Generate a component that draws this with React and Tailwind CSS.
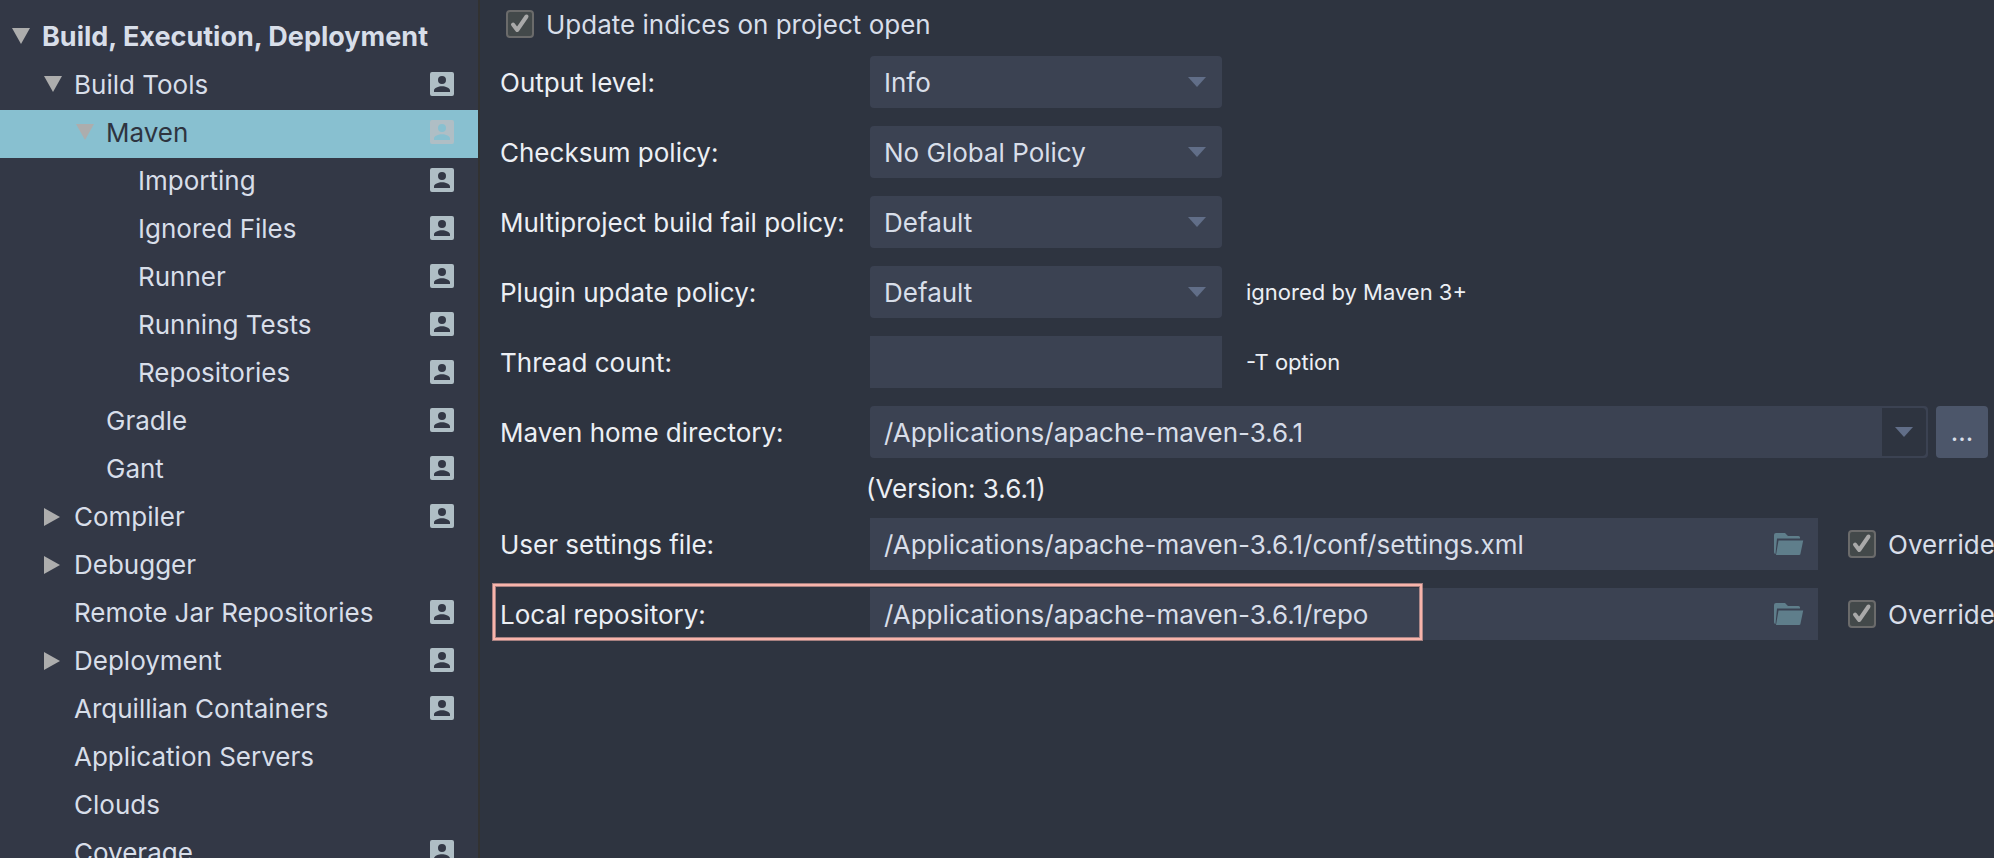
import { useState } from "react";

const tree = [
  { label: "Build, Execution, Deployment", level: 0, state: "open", bold: true },
  { label: "Build Tools", level: 1, state: "open", user: true },
  { label: "Maven", level: 2, state: "open", user: true },
  { label: "Importing", level: 3, user: true },
  { label: "Ignored Files", level: 3, user: true },
  { label: "Runner", level: 3, user: true },
  { label: "Running Tests", level: 3, user: true },
  { label: "Repositories", level: 3, user: true },
  { label: "Gradle", level: 2, user: true },
  { label: "Gant", level: 2, user: true },
  { label: "Compiler", level: 1, state: "closed", user: true },
  { label: "Debugger", level: 1, state: "closed" },
  { label: "Remote Jar Repositories", level: 1, user: true },
  { label: "Deployment", level: 1, state: "closed", user: true },
  { label: "Arquillian Containers", level: 1, user: true },
  { label: "Application Servers", level: 1 },
  { label: "Clouds", level: 1 },
  { label: "Coverage", level: 1, user: true },
];

const indents = ["pl-[12px]", "pl-[44px]", "pl-[76px]", "pl-[108px]"];

function UserIcon() {
  return (
    <svg viewBox="0 0 24 24" className="size-6 shrink-0 fill-[#afbec5]" aria-hidden="true">
      <path
        fillRule="evenodd"
        d="M2 0h20a2 2 0 0 1 2 2v20a2 2 0 0 1-2 2H2a2 2 0 0 1-2-2V2a2 2 0 0 1 2-2zM12 4a4 4 0 1 0 0 8a4 4 0 1 0 0-8zM4 20h16v-1.500c0-2.700-4.500-4.300-8-4.300s-8 1.600-8 4.300z"
      />
    </svg>
  );
}

function Disclosure({ state }) {
  return (
    <svg viewBox="0 0 18 18" className="mt-[2px] size-[18px] shrink-0 fill-[#adadad]" aria-hidden="true">
      {state === "open" && <path d="M0 0h18l-9 16z" />}
      {state === "closed" && <path d="M0 0l16 9l-16 9z" />}
    </svg>
  );
}

function TreeRow({ item, selected, onSelect }) {
  const tone = selected ? "bg-[#88c0d0] text-[#2e3440]" : "text-[#d8dee9]";
  return (
    <li>
      <button
        type="button"
        onClick={onSelect}
        aria-current={selected ? "page" : undefined}
        aria-expanded={item.state ? item.state === "open" : undefined}
        className={`flex h-12 w-full items-center gap-3 pr-6 pb-1 text-left ${indents[item.level]} ${tone}`}
      >
        <Disclosure state={item.state} />
        <span className={`flex-1 pt-[2px] whitespace-nowrap ${item.bold ? "text-[27px] font-bold" : ""}`}>
          {item.label}
        </span>
        {item.user && <UserIcon />}
      </button>
    </li>
  );
}

function DownArrow({ className }) {
  return (
    <svg viewBox="0 0 18 10" className={`h-[10px] w-[18px] fill-[#616e88] ${className}`} aria-hidden="true">
      <path d="M0 0h18l-9 10z" />
    </svg>
  );
}

function CheckBox({ label }) {
  return (
    <label className="flex items-center gap-3 whitespace-nowrap text-[#d8dee9]">
      <span className="grid size-7 shrink-0">
        <input
          type="checkbox"
          defaultChecked
          className="peer col-start-1 row-start-1 size-7 appearance-none rounded-[4px] border-2 border-[#6b6b6b] bg-[#43494a]"
        />
        <svg
          viewBox="0 0 28 28"
          className="pointer-events-none invisible col-start-1 row-start-1 size-7 fill-none stroke-[#a9a9a9] stroke-[4] peer-checked:visible"
          aria-hidden="true"
        >
          <path d="M7 14.500l4.200 5.500l9.300-13.500" strokeLinecap="round" strokeLinejoin="round" />
        </svg>
      </span>
      <span className="pt-[2px]">{label}</span>
    </label>
  );
}

function Row({ id, label, children }) {
  return (
    <div className="flex h-[52px] items-center">
      <label htmlFor={id} className="w-[370px] shrink-0 pt-[2px] whitespace-nowrap">
        {label}
      </label>
      {children}
    </div>
  );
}

function Select({ id, options }) {
  return (
    <span className="grid w-[352px] shrink-0 items-center">
      <select
        id={id}
        className="col-start-1 row-start-1 h-[52px] w-full appearance-none rounded-[4px] bg-[#3b4252] pt-[2px] pr-12 pl-[14px] text-[#d8dee9]"
      >
        {options.map((o) => (
          <option key={o}>{o}</option>
        ))}
      </select>
      <DownArrow className="pointer-events-none col-start-1 row-start-1 mr-4 justify-self-end" />
    </span>
  );
}

function FileField({ id, value }) {
  return (
    <>
      <span className="flex h-[52px] min-w-0 flex-1 items-center bg-[#3b4252] pr-[14px] pl-[14px]">
        <input
          id={id}
          defaultValue={value}
          className="min-w-0 flex-1 bg-transparent pt-[2px] text-[#d8dee9] outline-none"
        />
        <button type="button" aria-label="Browse">
          <svg viewBox="0 0 30 22" className="h-[22px] w-[30px] fill-[#5f7e8b]" aria-hidden="true">
            <path d="M0 2a2 2 0 0 1 2-2h9l3 3h10.500a1.500 1.500 0 0 1 1.500 1.500V5.500H3L1.500 21A2 2 0 0 1 0 19z" />
            <path d="M4.500 7.500H29.200l-2.700 13a1.500 1.500 0 0 1-1.500 1.500H2z" />
          </svg>
        </button>
      </span>
      <div className="w-[176px] shrink-0 pl-[30px]">
        <CheckBox label="Override" />
      </div>
    </>
  );
}

export default function App() {
  const [selected, setSelected] = useState("Maven");
  return (
    <div className="flex h-screen overflow-hidden bg-[#2e3440] font-['Inter',sans-serif] text-[26px] leading-8 text-[#eceff4]">
      <nav className="w-[480px] shrink-0 border-r-2 border-[#323232] bg-[#333846] pt-[14px]" aria-label="Settings">
        <ul>
          {tree.map((item) => (
            <TreeRow
              key={item.label}
              item={item}
              selected={item.label === selected}
              onSelect={() => setSelected(item.label)}
            />
          ))}
        </ul>
      </nav>

      <main className="min-w-0 flex-1 pt-[7px] pl-5">
        <div className="pl-[6px]">
          <CheckBox label="Update indices on project open" />
        </div>
        <form className="mt-[15px] flex flex-col gap-[18px]">
          <Row id="output" label="Output level:">
            <Select id="output" options={["Info", "Debug", "Warn", "Error", "Fatal"]} />
          </Row>
          <Row id="checksum" label="Checksum policy:">
            <Select id="checksum" options={["No Global Policy", "Fail", "Warn", "Ignore"]} />
          </Row>
          <Row id="fail" label="Multiproject build fail policy:">
            <Select id="fail" options={["Default", "Fail Fast", "Fail At End", "Never Fail"]} />
          </Row>
          <Row id="plugin" label="Plugin update policy:">
            <Select id="plugin" options={["Default", "Check For Updates", "Do Not Update"]} />
            <span className="pl-6 text-[22px]">ignored by Maven 3+</span>
          </Row>
          <Row id="threads" label="Thread count:">
            <input id="threads" className="h-[52px] w-[352px] bg-[#3b4252] px-[14px] text-[#d8dee9]" />
            <span className="pl-6 text-[22px]">-T option</span>
          </Row>
          <div>
            <Row id="home" label="Maven home directory:">
              <span className="flex h-[52px] min-w-0 flex-1 rounded-[4px] bg-[#3b4252] p-[2px]">
                <input
                  id="home"
                  defaultValue="/Applications/apache-maven-3.6.1"
                  className="min-w-0 flex-1 bg-transparent pt-[2px] pl-3 text-[#d8dee9] outline-none"
                />
                <button
                  type="button"
                  aria-label="Recent directories"
                  className="flex w-11 items-center justify-center rounded-r-[4px] bg-[#2e3440]"
                >
                  <DownArrow className="" />
                </button>
              </span>
              <button
                type="button"
                className="mr-[6px] ml-2 size-[52px] shrink-0 rounded-[4px] bg-[#4c566a] text-[#d8dee9]"
              >
                ...
              </button>
            </Row>
            <p className="mt-[15px] pl-[366px]">(Version: 3.6.1)</p>
            <div className="mt-[13px] flex flex-col gap-[18px]">
              <Row id="settings" label="User settings file:">
                <FileField id="settings" value="/Applications/apache-maven-3.6.1/conf/settings.xml" />
              </Row>
              <div className="relative">
                <Row id="repo" label="Local repository:">
                  <FileField id="repo" value="/Applications/apache-maven-3.6.1/repo" />
                </Row>
                <div className="pointer-events-none absolute -top-1 -left-[7px] h-14 w-[929px] border-2 border-[#f8b4ab] ring-1 ring-[#f8b4ab]/60 inset-ring-1 inset-ring-[#f8b4ab]/60" />
              </div>
            </div>
          </div>
        </form>
      </main>
    </div>
  );
}
